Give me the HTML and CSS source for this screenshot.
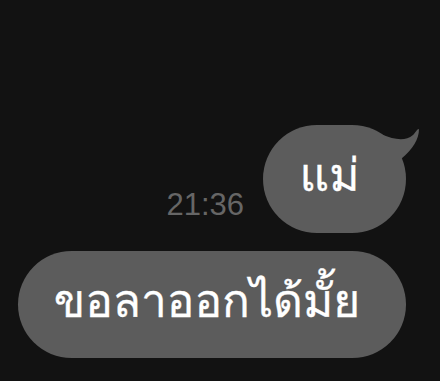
FILE: index.html
```html
<!DOCTYPE html>
<html lang="th">
<head>
    <meta charset="UTF-8">
    <meta name="viewport" content="width=device-width, initial-scale=1.0">
    <title>Chat</title>
    <link rel="stylesheet" href="styles.css">
</head>
<body>
    <div class="chat">
        <div class="row row-right">
            <span class="time">21:36</span>
            <div class="bubble bubble-short">
                <span class="msg">แม่</span>
                <svg class="tail" width="40" height="40" viewBox="0 0 40 40">
                    <path d="M0 10 C10 14 22 17 30 10 C33 7 34 4 36 4 C36 14 30 24 18 34 L0 34 Z" fill="#5c5c5c"/>
                </svg>
            </div>
        </div>
        <div class="row">
            <div class="bubble bubble-long">
                <span class="msg">ขอลาออกได้มั้ย</span>
            </div>
        </div>
    </div>
</body>
</html>
```

FILE: styles.css
```css
body { margin: 0; background-color: #121212; font-family: "Waree", "Loma", "Garuda", "Noto Sans Thai", "Noto Sans", sans-serif; }
.chat { display: flex; flex-direction: column; padding: 125px 34px 0 18px; gap: 18px; }
.row { display: flex; }
.row-right { justify-content: flex-end; align-items: flex-end; gap: 19px; }
.time { font-family: "Liberation Sans", Arial, sans-serif; font-size: 31px; color: #666; margin-bottom: 10px; }
.bubble { position: relative; background-color: #5c5c5c; color: #fff; display: flex; align-items: center; justify-content: center; box-sizing: border-box; padding: 0 10px 8px 0; }
.bubble-short { width: 143px; height: 108px; border-radius: 54px; }
.bubble-long { width: 388px; height: 107px; border-radius: 54px; }
.msg { font-size: 46px; line-height: 1; -webkit-text-stroke: 0.3px #fff; }
.tail { position: absolute; right: -17px; top: 0; }
```
